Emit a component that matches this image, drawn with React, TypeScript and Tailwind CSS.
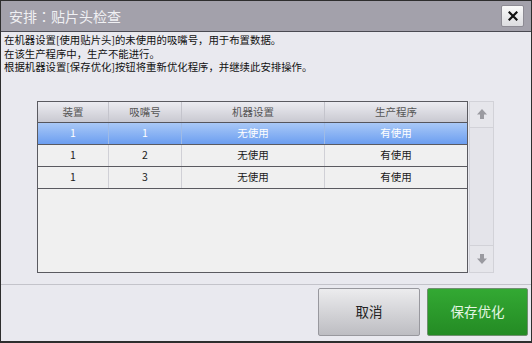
const rows = [
  { unit: "1", nozzle: "1", machine: "无使用", program: "有使用" },
  { unit: "1", nozzle: "2", machine: "无使用", program: "有使用" },
  { unit: "1", nozzle: "3", machine: "无使用", program: "有使用" },
];

const font = { fontFamily: '"Noto Sans CJK SC", "Liberation Sans", sans-serif' };
const tcFont = { fontFamily: '"Noto Sans CJK TC", sans-serif' };

export default function App() {
  return (
    <div
      style={font}
      className="w-[532px] h-[343px] flex flex-col bg-[#e9e9ef] border border-b-2 border-[#2e2e2e] overflow-hidden"
    >
      {/* title bar */}
      <div className="h-[31px] shrink-0 flex items-center justify-between bg-[#a3a1ab] border-b border-[#4a4a52] pl-[8px] pr-[7px]">
        <span className="text-[14px] text-[#f0f0f3]">
          安排<span style={tcFont}>：</span>贴片头检查
        </span>
        <button className="w-[23px] h-[22px] flex items-center justify-center rounded-[2px] border border-[#8d8b94] bg-gradient-to-b from-[#fafafa] to-[#dcdce0]">
          <svg width="10" height="10" viewBox="0 0 10 10">
            <path d="M1.5 1.5 L8.5 8.5 M8.5 1.5 L1.5 8.5" stroke="#111" strokeWidth="2.2" strokeLinecap="square" />
          </svg>
        </button>
      </div>

      {/* message */}
      <div className="pt-[1px] pl-[3px] text-[10.4px] leading-[13.5px] text-[#111]">
        <p>在机器设置[使用贴片头]的未使用的吸嘴号，用于布置数据。</p>
        <p>在该生产程序中，生产不能进行。</p>
        <p>根据机器设置[保存优化]按钮将重新优化程序，并继续此安排操作。</p>
      </div>

      {/* table + scrollbar */}
      <div className="mt-[27px] ml-[36px] flex gap-[1px] h-[172px]">
        <div className="w-[431px] h-full flex flex-col bg-[#f0f0f0] border border-[#5a5a60] text-[10.5px]">
          <div className="h-[21px] shrink-0 grid grid-cols-[71px_73px_143px_1fr] bg-gradient-to-b from-[#ececf1] to-[#c9c9d1] border-b border-[#55555c] text-[#555]">
            <div className="flex items-center justify-center border-r border-[#c4c4cc]">装置</div>
            <div className="flex items-center justify-center border-r border-[#c4c4cc]">吸嘴号</div>
            <div className="flex items-center justify-center border-r border-[#c4c4cc]">机器设置</div>
            <div className="flex items-center justify-center">生产程序</div>
          </div>
          {rows.map((r, i) => (
            <div
              key={i}
              className={
                i === 0
                  ? "h-[22px] shrink-0 grid grid-cols-[71px_73px_143px_1fr] bg-gradient-to-b from-[#a9c8f6] to-[#6c9ef0] text-white border-b border-[#5a5a60]"
                  : "h-[22px] shrink-0 grid grid-cols-[71px_73px_143px_1fr] text-[#1a1a1a] border-b border-[#5a5a60]"
              }
            >
              <div className={i === 0 ? "flex items-center justify-center border-r border-[#9fbbe6]" : "flex items-center justify-center border-r border-[#d0d0d6]"}>{r.unit}</div>
              <div className={i === 0 ? "flex items-center justify-center border-r border-[#9fbbe6]" : "flex items-center justify-center border-r border-[#d0d0d6]"}>{r.nozzle}</div>
              <div className={i === 0 ? "flex items-center justify-center border-r border-[#9fbbe6]" : "flex items-center justify-center border-r border-[#d0d0d6]"}>{r.machine}</div>
              <div className="flex items-center justify-center">{r.program}</div>
            </div>
          ))}
        </div>

        <div className="w-[25px] h-full flex flex-col justify-between bg-[#e4e4ea] border border-[#d2d2d8]">
          <div className="h-[26px] flex items-center justify-center bg-[#e6e6eb] border-b border-[#d2d2d8]">
            <svg width="12" height="12" viewBox="0 0 12 12">
              <path d="M6 1 L11 6.5 H8 V11 H4 V6.5 H1 Z" fill="#9a9aa0" />
            </svg>
          </div>
          <div className="h-[27px] flex items-center justify-center bg-[#e6e6eb] border-t border-[#d2d2d8]">
            <svg width="12" height="12" viewBox="0 0 12 12">
              <path d="M6 11 L11 5.5 H8 V1 H4 V5.5 H1 Z" fill="#9a9aa0" />
            </svg>
          </div>
        </div>
      </div>

      {/* footer */}
      <div className="mt-[11px] border-t border-[#c3c3ca] pt-[3px] flex justify-end gap-[7px] pr-[3px]">
        <button className="w-[102px] h-[48px] rounded-[2px] border border-[#98989e] bg-gradient-to-b from-[#ececee] to-[#bdbdc2] text-[13.5px] text-[#222]">
          取消
        </button>
        <button className="w-[101px] h-[48px] rounded-[2px] border border-[#6f8f6f] bg-gradient-to-b from-[#33a933] to-[#248b24] text-[13.5px] text-[#e4f6e4]">
          保存优化
        </button>
      </div>
    </div>
  );
}
